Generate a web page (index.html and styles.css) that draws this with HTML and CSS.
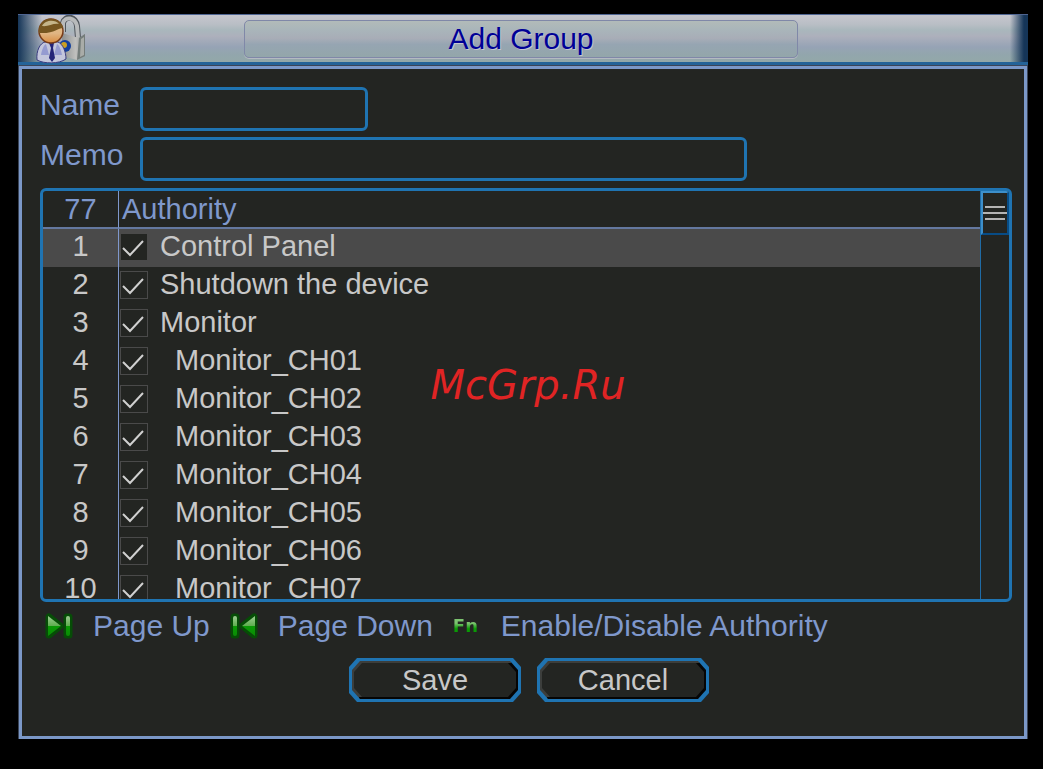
FILE: index.html
```html
<!DOCTYPE html>
<html lang="en">

<head>
  <meta charset="UTF-8">
  <meta name="viewport" content="width=device-width, initial-scale=1.0">
  <title>Add Group</title>
  <link rel="stylesheet" href="styles.css">
</head>

<body>
  <main class="window">
    <header class="titlebar">
      <svg class="logo" viewBox="0 0 54 48" aria-hidden="true">
        <defs>
          <linearGradient id="face" x1="0" y1="0" x2="0" y2="1">
            <stop offset="0" stop-color="#e0c08a" />
            <stop offset=".6" stop-color="#e0b583" />
            <stop offset="1" stop-color="#d98d42" />
          </linearGradient>
          <linearGradient id="metal" x1="0" y1="0" x2="1" y2="0">
            <stop offset="0" stop-color="#8c8f90" />
            <stop offset=".6" stop-color="#c0c0be" />
            <stop offset="1" stop-color="#8c8f90" />
          </linearGradient>
        </defs>
        <!-- lock -->
        <path d="M29 17L29 8C31 0 42 1 43 11L44 23" fill="none" stroke="#50565c" stroke-width="6" />
        <path d="M29 17L29 8C31 1 41 2 43 11L44 23" fill="none" stroke="#b8babb" stroke-width="4" />
        <path d="M28 18L45 23L51 19V41L43 45L28 41Z" fill="url(#metal)" />
        <path d="M45 23L51 19V41L43 45Z" fill="#747c7a" />
        <path d="M47 24L50 22V40L46 42Z" fill="#a9aca8" />
        <circle cx="31" cy="31" r="6" fill="#123f9c" />
        <circle cx="30" cy="30" r="3" fill="#c9a024" />
        <!-- user -->
        <path d="M3 45C2 36 6 28 11 27L24 27C29 29 32 37 32 44C25 49 10 49 3 45Z" fill="#c3c6dc" stroke="#3a3c80" />
        <path d="M7 40C8 34 10 30 12 29L15 40ZM28 40C27 34 25 30 23 29L20 40Z" fill="#959bd0" />
        <path d="M15 28H20L19 33L21 43L18 47L15 43L17 33Z" fill="#242478" />
        <circle cx="17" cy="16" r="12" fill="url(#face)" stroke="#773b18" stroke-width="1.5" />
        <path d="M5 18C4 8 11 3 18 4C24 4 29 9 29 13C24 13 20 19 5 18Z" fill="#765620" />
        <path d="M8 11C11 5 21 4 25 9C19 8 14 12 8 11Z" fill="#c5b58a" />
      </svg>
      <h1 class="title">Add Group</h1>
    </header>

    <form class="panel">
      <div class="field">
        <label for="name">Name</label>
        <input class="short" id="name" type="text">
      </div>
      <div class="field">
        <label for="memo">Memo</label>
        <input class="long" id="memo" type="text">
      </div>

      <div class="list">
        <table>
          <thead>
            <tr>
              <th class="num">77</th>
              <th>Authority</th>
            </tr>
          </thead>
          <tbody>
            <tr class="selected">
              <td class="num">1</td>
              <td><label><input type="checkbox" checked>Control Panel</label></td>
            </tr>
            <tr>
              <td class="num">2</td>
              <td><label><input type="checkbox" checked>Shutdown the device</label></td>
            </tr>
            <tr>
              <td class="num">3</td>
              <td><label><input type="checkbox" checked>Monitor</label></td>
            </tr>
            <tr class="child">
              <td class="num">4</td>
              <td><label><input type="checkbox" checked>Monitor_CH01</label></td>
            </tr>
            <tr class="child">
              <td class="num">5</td>
              <td><label><input type="checkbox" checked>Monitor_CH02</label></td>
            </tr>
            <tr class="child">
              <td class="num">6</td>
              <td><label><input type="checkbox" checked>Monitor_CH03</label></td>
            </tr>
            <tr class="child">
              <td class="num">7</td>
              <td><label><input type="checkbox" checked>Monitor_CH04</label></td>
            </tr>
            <tr class="child">
              <td class="num">8</td>
              <td><label><input type="checkbox" checked>Monitor_CH05</label></td>
            </tr>
            <tr class="child">
              <td class="num">9</td>
              <td><label><input type="checkbox" checked>Monitor_CH06</label></td>
            </tr>
            <tr class="child">
              <td class="num">10</td>
              <td><label><input type="checkbox" checked>Monitor_CH07</label></td>
            </tr>
          </tbody>
        </table>
        <div class="scrollbar">
          <div class="thumb"><i></i><i></i><i></i></div>
        </div>
      </div>

      <div class="hints">
        <svg class="key" viewBox="0 0 28 28" aria-hidden="true">
          <defs>
            <linearGradient id="green" x1="0" y1="3" x2="0" y2="25" gradientUnits="userSpaceOnUse">
              <stop offset="0" stop-color="#a3cf98" />
              <stop offset=".49" stop-color="#5fae50" />
              <stop offset=".5" stop-color="#0a9a05" />
              <stop offset="1" stop-color="#0a8a05" />
            </linearGradient>
          </defs>
          <path class="glow" d="M4 5V23L15 14Z" />
          <path class="glow" d="M22 5H24V23H22Z" />
          <path d="M3 4V24L16 14Z" fill="url(#green)" />
          <rect x="21" y="4" width="4" height="20" rx="2" fill="url(#green)" />
        </svg>
        <span>Page Up</span>
        <svg class="key" viewBox="0 0 28 28" aria-hidden="true">
          <path class="glow" d="M24 5V23L13 14Z" />
          <path class="glow" d="M4 5H6V23H4Z" />
          <path d="M25 4V24L12 14Z" fill="url(#green)" />
          <rect x="3" y="4" width="4" height="20" rx="2" fill="url(#green)" />
        </svg>
        <span>Page Down</span>
        <b class="key fn">Fn</b>
        <span>Enable/Disable Authority</span>
      </div>

      <div class="actions">
        <button type="button">Save</button>
        <button type="button">Cancel</button>
      </div>
    </form>

    <div class="watermark">McGrp.Ru</div>
  </main>
</body>

</html>
```
FILE: styles.css
```css
* {
  box-sizing: border-box;
}

body {
  margin: 0;
  background: #000;
  color: #c8c8c8;
  font-family: "Liberation Sans", Arial, sans-serif;
  font-size: 29px;
}

.window {
  position: relative;
  margin: 14px 15px 0 18px;
}

/* title bar */
.titlebar {
  display: grid;
  grid-template-columns: 1fr 55% 1fr;
  align-items: center;
  height: 52px;
  padding-right: 4px;
  border-top: 1px solid #4f6592;
  border-bottom: 4px solid #246398;
  background:
    linear-gradient(to right, #153558, rgba(21, 53, 88, 0) 24px),
    linear-gradient(to left, #153558 4px, rgba(21, 53, 88, 0) 18px),
    linear-gradient(#c6c6ce, #b9bec5 20%, #a9b7bc 32%, #adb0bc 45%, #96a3b5 68%, #92a6ac 85%, #93a8a9);
}

.logo {
  width: 54px;
  height: 48px;
  margin-left: 16px;
}

.title {
  height: 38px;
  margin: 0;
  border: 1px solid #8088a8;
  border-radius: 5px;
  background: linear-gradient(#b2bbb9, #a9b5ba 25%, #a8adb7 48%, #96a5b2 65%, #93a6aa);
  box-shadow: 0 1px 0 #b4bac2;
  color: #000096;
  font-size: 30px;
  font-weight: normal;
  line-height: 36px;
  text-align: center;
  text-shadow: 1px 1px 0 #c4c4d0;
}

.panel {
  margin: 0 1px;
  padding: 18px 12px 34px 18px;
  border: 3px solid #7b98c8;
  background: #232522;
  box-shadow: 0 0 0 1px #3b4558;
}

/* text fields */
.field {
  display: grid;
  grid-template-columns: 100px 1fr;
  margin-bottom: 6px;
  color: #7f98cc;
  font-size: 30px;
  line-height: 36px;
}

.field input {
  height: 44px;
  max-width: 100%;
  padding: 0 8px;
  border: 3px solid #1f74b2;
  border-radius: 6px;
  background: transparent;
  color: #c8c8c8;
  font: inherit;
}

.short {
  width: 228px;
}

.long {
  width: 607px;
}

/* authority list */
.list {
  display: flex;
  height: 414px;
  margin-top: 7px;
  border: 3px solid #1f74b2;
  border-radius: 6px;
  overflow: hidden;
}

table {
  flex: 1;
  border-collapse: separate;
  border-spacing: 0;
}

th,
td {
  height: 38px;
  padding: 0 0 4px 1px;
  font-weight: normal;
  line-height: 34px;
  text-align: left;
}

th {
  padding: 0 0 0 3px;
  border-bottom: 2px solid #64789f;
  color: #7f98cc;
  line-height: 36px;
}

.num {
  width: 76px;
  padding-left: 0;
  border-right: 1px solid #7f98cc;
  text-align: center;
}

td label {
  display: flex;
  align-items: center;
}

.selected {
  background: #4a4a4a;
}

input[type="checkbox"] {
  appearance: none;
  width: 28px;
  height: 28px;
  margin: 2px 12px 0 0;
  border: 1px solid #4a4a4a;
  background: #232522;
}

input[type="checkbox"]:checked {
  background: #232522 url("data:image/svg+xml,%3Csvg xmlns='http://www.w3.org/2000/svg' viewBox='0 0 26 26'%3E%3Cpath d='M2 14L9 21L22 7' fill='none' stroke='%23d0d0d0' stroke-width='2'/%3E%3C/svg%3E");
}

.child input[type="checkbox"] {
  margin-right: 27px;
}

.scrollbar {
  width: 29px;
  border-left: 1px solid #1f6ba5;
}

.thumb {
  display: flex;
  flex-direction: column;
  align-items: center;
  justify-content: center;
  gap: 4px;
  height: 44px;
  border: 2px solid #3d8fca;
  border-right-color: #074c86;
  border-bottom-color: #074c86;
}

.thumb i {
  width: 20px;
  height: 2px;
  background: #b4b4b4;
}

.thumb i:nth-child(2) {
  width: 24px;
}

/* key hints */
.hints {
  display: flex;
  align-items: center;
  gap: 20px;
  margin: 6px 0 14px 5px;
  color: #7f98cc;
  font-size: 30px;
  line-height: 36px;
}

.key {
  width: 28px;
  height: 28px;
}

.glow {
  fill: #064d06;
  stroke: #064d06;
  stroke-width: 7;
  stroke-linejoin: round;
}

.fn {
  background: linear-gradient(#7cc470 40%, #0a9a05 60%);
  background-clip: text;
  color: transparent;
  font-family: "DejaVu Sans", sans-serif;
  font-size: 18px;
  line-height: 28px;
}

/* bevelled buttons */
.actions {
  display: flex;
  justify-content: center;
  gap: 16px;
  padding-left: 6px;
}

button {
  position: relative;
  z-index: 0;
  width: 172px;
  height: 44px;
  padding: 0;
  border: none;
  background: #1f74b2;
  color: #c8c8c8;
  font: inherit;
}

button,
button::before,
button::after {
  clip-path: polygon(8px 0, calc(100% - 8px) 0, 100% 9px, 100% calc(100% - 9px), calc(100% - 8px) 100%, 8px 100%, 0 calc(100% - 9px), 0 9px);
}

button::before,
button::after {
  content: "";
  position: absolute;
  z-index: -1;
  inset: 3px;
  background: linear-gradient(to bottom right, #3c3e3c 50%, #050505 50%);
}

button::after {
  inset: 5px;
  background: #232522;
}

.watermark {
  position: absolute;
  top: 348px;
  left: 0;
  width: 100%;
  padding-left: 10px;
  color: #e02424;
  font-family: "DejaVu Sans", sans-serif;
  font-size: 40px;
  font-style: italic;
  text-align: center;
  pointer-events: none;
}
```
